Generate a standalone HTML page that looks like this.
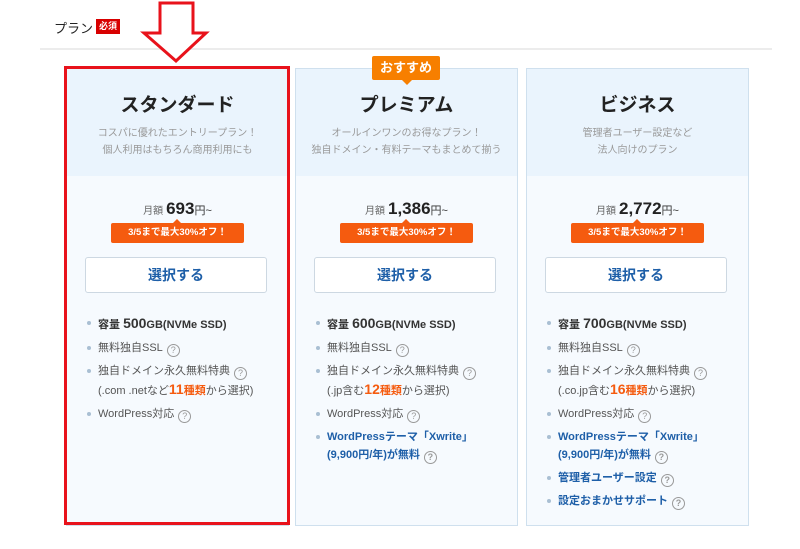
<!DOCTYPE html>
<html><head><meta charset="utf-8"><style>
*{margin:0;padding:0;box-sizing:border-box}
body{width:800px;height:549px;background:#fff;font-family:"Liberation Sans","Noto Sans CJK JP",sans-serif;position:relative;overflow:hidden;color:#333}
.hd{position:absolute;left:54px;top:18px;font-size:13px;color:#222}
.req{position:absolute;left:96px;top:19px;width:24px;height:15px;background:#d80000;color:#fff;font-size:9px;font-weight:bold;text-align:center;line-height:15px}
.line{position:absolute;left:40px;top:48px;width:732px;height:2px;background:#ececec}
.card{position:absolute;top:68px;width:223px;height:458px;background:#f6fafe;border:1px solid #cfe0ee}
.top{height:107px;background:#eaf4fd;text-align:center}
.top h2{font-size:19px;font-weight:bold;color:#222;padding-top:25px;line-height:24px}
.top p{font-size:10px;color:#999;line-height:17px;margin-top:7px}
.price{text-align:center;margin-top:23px;font-size:10px;color:#666;line-height:20px}
.price b{font-size:17px;color:#222;margin-left:3px}
.price span{font-size:11px;color:#333}
.off{position:relative;margin:1px auto 0;width:133px;height:20px;background:#f55b0f;color:#fff;font-size:9.5px;font-weight:bold;text-align:center;line-height:20px;border-radius:2px}
.off:before{content:"";position:absolute;left:62px;top:-4px;border-left:4px solid transparent;border-right:4px solid transparent;border-bottom:4px solid #f55b0f}
.btn{margin:14px 0 0 18px;width:182px;height:36px;background:#fff;border:1px solid #cdd8e2;border-radius:3px;text-align:center;line-height:34px;font-size:14px;font-weight:bold;color:#1e5fa8}
ul{list-style:none;margin:21px 0 0 20px;font-size:11px;color:#555}
li{position:relative;padding-left:11px;line-height:18px;margin-bottom:5px}
li:before{content:"";position:absolute;left:0;top:7px;width:4px;height:4px;border-radius:50%;background:#a9bfd3}
.q{display:inline-block;width:13px;height:13px;border:1px solid #999;border-radius:50%;font-size:9px;line-height:11px;text-align:center;color:#999;margin-left:4px;vertical-align:-2px}
.big{font-weight:bold;color:#333}
.big b{font-size:14px}
.o{color:#f55b0f;font-weight:bold}.o b{font-size:14px}
.bl{color:#1e5fa8;font-weight:bold}
.rec{position:absolute;left:372px;top:56px;width:68px;height:24px;background:#f77f00;color:#fff;font-size:13px;font-weight:bold;text-align:center;line-height:24px;border-radius:2px}
.rec:after{content:"";position:absolute;left:30px;bottom:-5px;border-left:5px solid transparent;border-right:5px solid transparent;border-top:5px solid #f77f00}
.red{position:absolute;left:64px;top:66px;width:226px;height:459px;border:3px solid #e8121b}
</style></head><body>
<div class="hd">プラン</div><div class="req">必須</div>
<div class="line"></div>
<svg style="position:absolute;left:0;top:0" width="800" height="70"><path d="M160 3H193V33H206L176 61L144 33H160Z" fill="#fff" stroke="#e8121b" stroke-width="3"/></svg>
<div class="card" style="left:66px">
<div class="top"><h2>スタンダード</h2><p>コスパに優れたエントリープラン！<br>個人利用はもちろん商用利用にも</p></div>
<div class="price">月額<b>693</b><span>円~</span></div>
<div class="off">3/5まで最大30%オフ！</div>
<div class="btn">選択する</div>
<ul><li class="big">容量 <b>500</b>GB(NVMe SSD)</li>
<li>無料独自SSL<span class="q">?</span></li>
<li>独自ドメイン永久無料特典<span class="q">?</span><br>(.com .netなど<span class="o"><b>11</b>種類</span>から選択)</li>
<li>WordPress対応<span class="q">?</span></li></ul>
</div>
<div class="card" style="left:295px">
<div class="top"><h2>プレミアム</h2><p>オールインワンのお得なプラン！<br>独自ドメイン・有料テーマもまとめて揃う</p></div>
<div class="price">月額<b>1,386</b><span>円~</span></div>
<div class="off">3/5まで最大30%オフ！</div>
<div class="btn">選択する</div>
<ul><li class="big">容量 <b>600</b>GB(NVMe SSD)</li>
<li>無料独自SSL<span class="q">?</span></li>
<li>独自ドメイン永久無料特典<span class="q">?</span><br>(.jp含む<span class="o"><b>12</b>種類</span>から選択)</li>
<li>WordPress対応<span class="q">?</span></li>
<li class="bl">WordPressテーマ「Xwrite」<br>(9,900円/年)が無料<span class="q">?</span></li></ul>
</div>
<div class="card" style="left:526px">
<div class="top"><h2>ビジネス</h2><p>管理者ユーザー設定など<br>法人向けのプラン</p></div>
<div class="price">月額<b>2,772</b><span>円~</span></div>
<div class="off">3/5まで最大30%オフ！</div>
<div class="btn">選択する</div>
<ul><li class="big">容量 <b>700</b>GB(NVMe SSD)</li>
<li>無料独自SSL<span class="q">?</span></li>
<li>独自ドメイン永久無料特典<span class="q">?</span><br>(.co.jp含む<span class="o"><b>16</b>種類</span>から選択)</li>
<li>WordPress対応<span class="q">?</span></li>
<li class="bl">WordPressテーマ「Xwrite」<br>(9,900円/年)が無料<span class="q">?</span></li>
<li class="bl">管理者ユーザー設定<span class="q">?</span></li>
<li class="bl">設定おまかせサポート<span class="q">?</span></li></ul>
</div>
<div class="rec">おすすめ</div>
<div class="red"></div>
</body></html>
